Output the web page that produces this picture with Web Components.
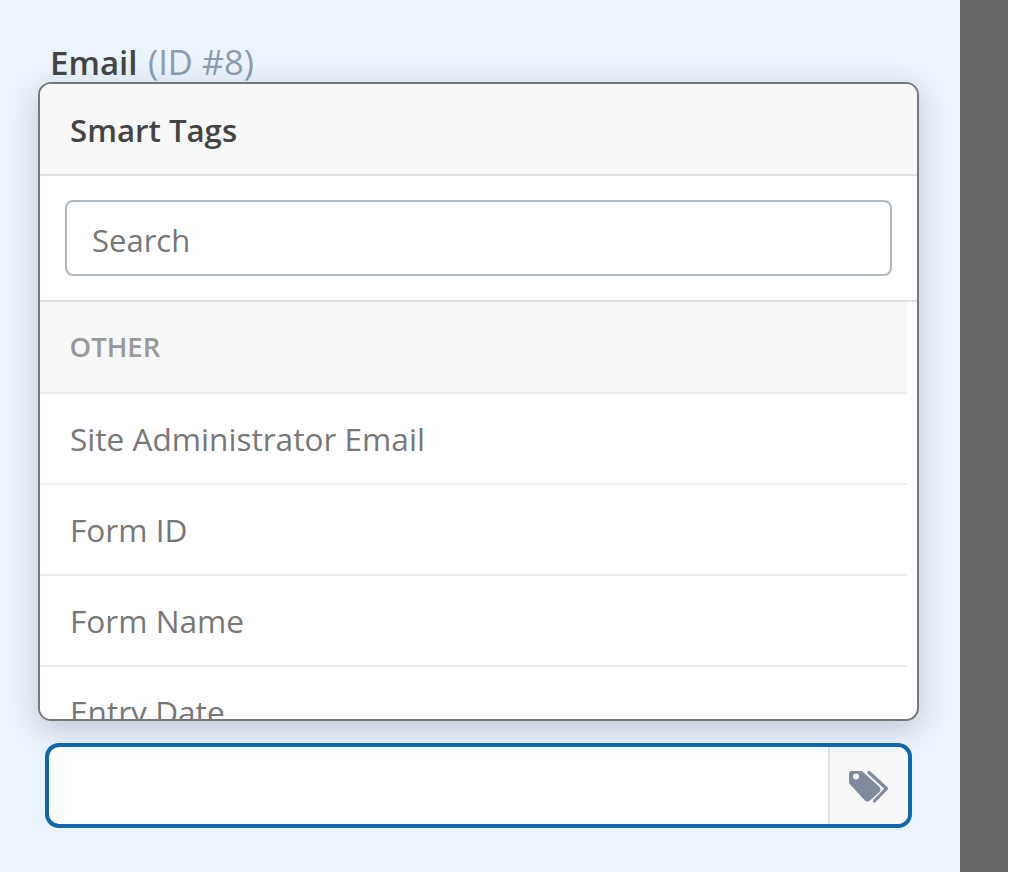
<!DOCTYPE html>
<html>
<head>
<meta charset="utf-8">
<title>Smart Tags</title>
<style>
  html, body { margin: 0; height: 100%; background: #fff; }
  body { font-family: "Open Sans", "Noto Sans", sans-serif; }
</style>
</head>
<body>
<builder-page>
  <smart-field label="Email" hint="(ID #8)">
    <tag-row heading>OTHER</tag-row>
    <tag-row>Site Administrator Email</tag-row>
    <tag-row>Form ID</tag-row>
    <tag-row>Form Name</tag-row>
    <tag-row>Entry Date</tag-row>
  </smart-field>
</builder-page>
<script>
class BuilderPage extends HTMLElement {
  constructor() {
    super();
    this.attachShadow({ mode: 'open' });
    this.shadowRoot.innerHTML = `
      <style>
        :host { display: grid; grid-template-columns: 960px 48px 16px; height: 872px; overflow: hidden; }
        .panel { background: #ebf3fc; padding: 38px 49px 0 46px; }
        .bar { background: #666; }
      </style>
      <div class="panel"><slot></slot></div>
      <div class="bar"></div>
      <div></div>
    `;
  }
}

class TagRow extends HTMLElement {
  constructor() {
    super();
    this.attachShadow({ mode: 'open' });
    this.shadowRoot.innerHTML = `
      <style>
        :host { display: block; box-sizing: border-box; height: 91.3px; padding: 0 30px; line-height: 90px;
          font-size: 31.6px; color: #777; background: #fff; border-bottom: 2px solid #eee; white-space: nowrap; }
        :host([heading]) { height: 91.6px; line-height: 90px; padding-left: 29.500px; font-size: 27.5px; font-weight: 600; color: #999; background: #f8f8f8; }
      </style>
      <slot></slot>
    `;
  }
}

class SmartField extends HTMLElement {
  constructor() {
    super();
    this.attachShadow({ mode: 'open' });
    this.shadowRoot.innerHTML = `
      <style>
        :host { display: block; position: relative; }
        .label { margin: 0 0 0 4px; height: 45px; line-height: 47px; font-size: 33px; font-weight: 600; color: #444; white-space: nowrap; word-spacing: 2px; }
        .label span { font-size: 34.5px; font-weight: 400; color: #8a9bb0; word-spacing: 0; }
        .popup { position: absolute; left: -8px; top: 44px; width: 881px; height: 639px; box-sizing: border-box;
          background: #fff; border: 2px solid #777; border-radius: 13px; overflow: hidden;
          display: flex; flex-direction: column; }
        .shadow { position: absolute; left: -8px; top: 44px; width: 881px; height: 639px; border-radius: 13px;
          box-shadow: 0 8px 28px rgba(60, 80, 110, .25); }
        .title { flex: none; box-sizing: border-box; height: 91.5px; padding: 0 30px; line-height: 92px; font-size: 31.2px; font-weight: 600;
          color: #444; background: #f8f8f8; border-bottom: 2px solid #e0e0e0; }
        .search { flex: none; box-sizing: border-box; height: 126.5px; padding: 24.5px 25px 0 25px; border-bottom: 2px solid #e0e0e0; }
        .search input { display: block; width: 100%; height: 76px; box-sizing: border-box; padding: 4px 25px 0; font: 31px "Open Sans", "Noto Sans", sans-serif;
          color: #777; border: 2px solid #b0b8c1; border-radius: 8px; outline: none; background: #fff; }
        .search input::placeholder { color: #777; opacity: 1; }
        .list { flex: 1; overflow: hidden; margin-right: 10px; }
        .input { box-sizing: border-box; height: 85px; margin: 660px -1px 0 -1px; background: #fff; border: 4.500px solid #0d68ae; border-radius: 14px;
          display: flex; justify-content: flex-end; overflow: hidden; }
        .tag-btn { box-sizing: border-box; width: 80px; background: #f8f8f8; border-left: 2px solid #e2e6ea;
          display: flex; align-items: center; justify-content: center; }
        .tag-btn svg { margin-top: 3px; }
      </style>
      <div class="label"></div>
      <div class="shadow"></div>
      <div class="popup">
        <div class="title">Smart Tags</div>
        <div class="search"><input type="text" placeholder="Search"></div>
        <div class="list"><slot></slot></div>
      </div>
      <div class="input">
        <div class="tag-btn">
          <svg width="40" height="34" viewBox="0 0 40 34">
            <path fill="#7f8a9e" fill-rule="evenodd" d="M3 1h8.500c1 0 1.900.4 2.600 1.100L30.500 17c1.400 1.400 1.400 3.700 0 5.100L21 30.600c-1.400 1.400-3.700 1.400-5.100 0L1.100 14.500C.4 13.800 0 12.900 0 12V4C0 2.300 1.300 1 3 1zM7 3.500a3 3 0 1 0 0 6 3 3 0 0 0 0-6z"/>
            <path fill="none" stroke="#7f8a9e" stroke-width="3.200" stroke-linecap="round" stroke-linejoin="round" d="M20 2.500 37.500 18.500 25.500 31"/>
          </svg>
        </div>
      </div>
    `;
    const label = this.shadowRoot.querySelector('.label');
    label.textContent = this.getAttribute('label') + ' ';
    const hint = document.createElement('span');
    hint.textContent = this.getAttribute('hint');
    label.appendChild(hint);
  }
}

customElements.define('builder-page', BuilderPage);
customElements.define('tag-row', TagRow);
customElements.define('smart-field', SmartField);
</script>
</body>
</html>
